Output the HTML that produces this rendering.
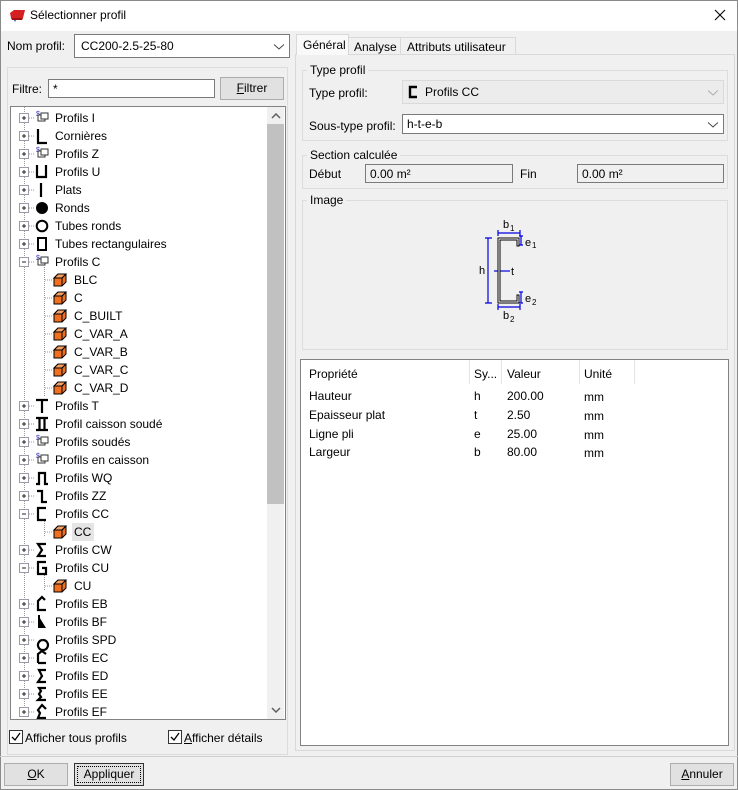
<!DOCTYPE html>
<html><head><meta charset="utf-8"><style>
*{box-sizing:border-box;margin:0;padding:0}
body{width:738px;height:790px;background:#f0f0f0;font-family:"Liberation Sans",sans-serif;font-size:12px;color:#000;position:relative;overflow:hidden}
.a{position:absolute}
.win{left:0;top:0;width:738px;height:790px;border:1px solid #8a8a8a}
.title{left:1px;top:1px;width:736px;height:30px;background:#fff}
.inp{background:#fff;border:1px solid #7a7a7a}
.btn{background:#e1e1e1;border:1px solid #adadad;text-align:center;line-height:21px}
.grp{border:1px solid #dcdcdc}
.gl{background:#f0f0f0;padding:0 3px}
.row{position:absolute;left:0;height:18px;width:256px}
.row span{position:absolute;top:2px;white-space:nowrap}
.dis{background:#f0f0f0;border:1px solid #7a7a7a}
u{text-decoration:underline}
</style></head><body>
<div class="a win"></div>
<div class="a title"></div>
<svg class="a" style="left:8px;top:9px" width="18" height="14"><path d="M2 4 L6 1 L17 1 L15 9 L3 9 Z" fill="#d42020"/><path d="M3 9 L15 9 L14 11 L4 11Z" fill="#a01010"/><path d="M6 11 L8 11 L7 13Z" fill="#2050c0"/></svg>
<div class="a" style="left:30px;top:8px;font-size:12px">Sélectionner profil</div>
<svg class="a" style="left:714px;top:9px" width="12" height="12"><path d="M1 1L11 11M11 1L1 11" stroke="#000" stroke-width="1.1"/></svg>

<div class="a" style="left:7px;top:39px">Nom profil:</div>
<div class="a inp" style="left:74px;top:34px;width:216px;height:24px"><span class="a" style="left:6px;top:4px">CC200-2.5-25-80</span>
<svg class="a" style="right:5px;top:9px" width="10" height="6"><path d="M0 0.5L5 5L10 0.5" stroke="#444" fill="none"/></svg></div>

<div class="a grp" style="left:7px;top:67px;width:281px;height:688px"></div>
<div class="a" style="left:12px;top:82px">Filtre:</div>
<div class="a inp" style="left:48px;top:79px;width:167px;height:19px"><span class="a" style="left:4px;top:2px">*</span></div>
<div class="a btn" style="left:220px;top:77px;width:64px;height:23px"><u>F</u>iltrer</div>

<div class="a" style="left:10px;top:106px;width:276px;height:614px;background:#fff;border:1px solid #828282;overflow:hidden">
<div class="a" style="left:256px;top:0;width:17px;height:612px;background:#f0f0f0"></div>
<div class="a" style="left:256px;top:17px;width:17px;height:380px;background:#c1c1c1"></div>
<svg class="a" style="left:260px;top:6px" width="10" height="6"><path d="M1 5L5 1L9 5" stroke="#606060" stroke-width="1.5" fill="none"/></svg>
<svg class="a" style="left:260px;top:600px" width="10" height="6"><path d="M1 1L5 5L9 1" stroke="#606060" stroke-width="1.5" fill="none"/></svg>
<svg class="a" style="left:0;top:0" width="256" height="612">
<defs>
<g id="p"><rect x="-4.5" y="-4.5" width="9" height="9" fill="#fff" stroke="#9a9aa8"/><path d="M-2 0H2M0 -2V2" stroke="#222"/></g>
<g id="m"><rect x="-4.5" y="-4.5" width="9" height="9" fill="#fff" stroke="#9a9aa8"/><path d="M-2 0H2" stroke="#222"/></g>
<g id="cube"><path d="M-6 -2L-2 -6H6V2L2 6H-6Z" fill="#f07020" stroke="#000"/><path d="M-6 -2H2L6-6H-2Z" fill="#f8a060"/><path d="M-6 -2H2V6M2 -2L6 -6" fill="none" stroke="#000"/><path d="M-6 -2L-2 -6H6L2 -2Z" fill="none" stroke="#000"/></g>
<g id="s"><text x="-6" y="-2" font-size="7" fill="#3030c0" font-family="Liberation Sans">$</text><rect x="-4" y="-3" width="7" height="6" fill="#fff" stroke="#333"/><rect x="-1" y="-5" width="7" height="6" fill="#fff" stroke="#333"/></g>
</defs>
<g stroke="#999" stroke-dasharray="1 1" fill="none">
<path d="M13.5 0V600"/>
<path d="M33.5 160V290M33.5 412V430M33.5 466V484"/>
</g>
<g stroke="#999" stroke-dasharray="1 1">
<path d="M18 11H24M18 29H24M18 47H24M18 65H24M18 83H24M18 101H24M18 119H24M18 137H24M18 155H24M18 299H24M18 317H24M18 335H24M18 353H24M18 371H24M18 389H24M18 407H24M18 443H24M18 461H24M18 497H24M18 515H24M18 533H24M18 551H24M18 569H24M18 587H24M18 605H24"/>
<path d="M34 173H42M34 191H42M34 209H42M34 227H42M34 245H42M34 263H42M34 281H42M34 425H42M34 479H42"/>
</g>
<use href="#p" x="13" y="11"/><use href="#p" x="13" y="29"/><use href="#p" x="13" y="47"/><use href="#p" x="13" y="65"/><use href="#p" x="13" y="83"/><use href="#p" x="13" y="101"/><use href="#p" x="13" y="119"/><use href="#p" x="13" y="137"/><use href="#m" x="13" y="155"/>
<use href="#p" x="13" y="299"/><use href="#p" x="13" y="317"/><use href="#p" x="13" y="335"/><use href="#p" x="13" y="353"/><use href="#p" x="13" y="371"/><use href="#p" x="13" y="389"/><use href="#m" x="13" y="407"/><use href="#p" x="13" y="443"/><use href="#m" x="13" y="461"/>
<use href="#p" x="13" y="497"/><use href="#p" x="13" y="515"/><use href="#p" x="13" y="533"/><use href="#p" x="13" y="551"/><use href="#p" x="13" y="569"/><use href="#p" x="13" y="587"/><use href="#p" x="13" y="605"/>
<use href="#s" x="31" y="11"/><use href="#s" x="31" y="47"/><use href="#s" x="31" y="155"/><use href="#s" x="31" y="335"/><use href="#s" x="31" y="353"/>
<use href="#cube" x="49" y="173"/><use href="#cube" x="49" y="191"/><use href="#cube" x="49" y="209"/><use href="#cube" x="49" y="227"/><use href="#cube" x="49" y="245"/><use href="#cube" x="49" y="263"/><use href="#cube" x="49" y="281"/><use href="#cube" x="49" y="425"/><use href="#cube" x="49" y="479"/>
<g fill="none" stroke="#000" stroke-width="2.2">
<path d="M27 22V36H36"/>
<path d="M26 58V70H35V58"/>
<path d="M30 76V90"/>
<path d="M25 293H37M31 293V306"/>
<path d="M25 311H37M25 323H37M28.5 311V323M33.5 311V323"/>
<path d="M25 377H28V366H34V377H37"/>
<path d="M26 384H31V395H36"/>
<path d="M35 401H27V413H35"/>
<path d="M35 437H27L31 443L27 449H35"/>
<path d="M35 455H27V467H35V461H31"/>
<path d="M34 493L31 490L27 494V503H35"/>
<path d="M32 533A5 5 0 1 1 31.9 533" />
<path d="M27 556V547L31 544L35 547M27 556H35"/>
<path d="M35 563H28L31 569L27 575H35"/>
<path d="M35 581H28L30 584L28 587L30 590L27 593H35"/>
<path d="M35 602L31 598L27 603L29 606L27 611H35"/>
</g>
<path d="M27 508V521H35Z" fill="#000"/>
<rect x="27" y="508" width="2" height="13" fill="#000"/>
<circle cx="31" cy="101" r="6" fill="#000"/>
<circle cx="31" cy="119" r="5.3" fill="none" stroke="#000" stroke-width="2"/>
<rect x="27" y="131" width="8" height="12" fill="none" stroke="#000" stroke-width="2"/>
</svg>
<div class="row" style="top:2px"><span style="left:44px">Profils I</span></div>
<div class="row" style="top:20px"><span style="left:44px">Cornières</span></div>
<div class="row" style="top:38px"><span style="left:44px">Profils Z</span></div>
<div class="row" style="top:56px"><span style="left:44px">Profils U</span></div>
<div class="row" style="top:74px"><span style="left:44px">Plats</span></div>
<div class="row" style="top:92px"><span style="left:44px">Ronds</span></div>
<div class="row" style="top:110px"><span style="left:44px">Tubes ronds</span></div>
<div class="row" style="top:128px"><span style="left:44px">Tubes rectangulaires</span></div>
<div class="row" style="top:146px"><span style="left:44px">Profils C</span></div>
<div class="row" style="top:164px"><span style="left:63px">BLC</span></div>
<div class="row" style="top:182px"><span style="left:63px">C</span></div>
<div class="row" style="top:200px"><span style="left:63px">C_BUILT</span></div>
<div class="row" style="top:218px"><span style="left:63px">C_VAR_A</span></div>
<div class="row" style="top:236px"><span style="left:63px">C_VAR_B</span></div>
<div class="row" style="top:254px"><span style="left:63px">C_VAR_C</span></div>
<div class="row" style="top:272px"><span style="left:63px">C_VAR_D</span></div>
<div class="row" style="top:290px"><span style="left:44px">Profils T</span></div>
<div class="row" style="top:308px"><span style="left:44px">Profil caisson soudé</span></div>
<div class="row" style="top:326px"><span style="left:44px">Profils soudés</span></div>
<div class="row" style="top:344px"><span style="left:44px">Profils en caisson</span></div>
<div class="row" style="top:362px"><span style="left:44px">Profils WQ</span></div>
<div class="row" style="top:380px"><span style="left:44px">Profils ZZ</span></div>
<div class="row" style="top:398px"><span style="left:44px">Profils CC</span></div>
<div class="a" style="left:61px;top:416px;width:22px;height:18px;background:#e5e5e5"></div>
<div class="row" style="top:416px"><span style="left:63px">CC</span></div>
<div class="row" style="top:434px"><span style="left:44px">Profils CW</span></div>
<div class="row" style="top:452px"><span style="left:44px">Profils CU</span></div>
<div class="row" style="top:470px"><span style="left:63px">CU</span></div>
<div class="row" style="top:488px"><span style="left:44px">Profils EB</span></div>
<div class="row" style="top:506px"><span style="left:44px">Profils BF</span></div>
<div class="row" style="top:524px"><span style="left:44px">Profils SPD</span></div>
<div class="row" style="top:542px"><span style="left:44px">Profils EC</span></div>
<div class="row" style="top:560px"><span style="left:44px">Profils ED</span></div>
<div class="row" style="top:578px"><span style="left:44px">Profils EE</span></div>
<div class="row" style="top:596px"><span style="left:44px">Profils EF</span></div>
</div>

<svg class="a" style="left:9px;top:730px" width="14" height="14"><rect x=".5" y=".5" width="13" height="13" fill="#fff" stroke="#333"/><path d="M3 7L6 10L11 3" stroke="#000" stroke-width="1.3" fill="none"/></svg>
<div class="a" style="left:25px;top:731px">Afficher tous profils</div>
<svg class="a" style="left:168px;top:730px" width="14" height="14"><rect x=".5" y=".5" width="13" height="13" fill="#fff" stroke="#333"/><path d="M3 7L6 10L11 3" stroke="#000" stroke-width="1.3" fill="none"/></svg>
<div class="a" style="left:184px;top:731px"><u>A</u>fficher détails</div>

<div class="a" style="left:0;top:756px;width:738px;height:1px;background:#d0d0d0"></div>
<div class="a btn" style="left:4px;top:763px;width:64px;height:23px"><u>O</u>K</div>
<div class="a btn" style="left:74px;top:763px;width:70px;height:23px;outline:1px dotted #000;outline-offset:-4px;border-color:#333">Appliquer</div>
<div class="a btn" style="left:670px;top:763px;width:64px;height:23px"><u>A</u>nnuler</div>

<div class="a" style="left:295px;top:54px;width:440px;height:697px;border:1px solid #d9d9d9;background:#f0f0f0"></div>
<div class="a" style="left:296px;top:34px;width:53px;height:21px;background:#f9f9f9;border:1px solid #d9d9d9;border-bottom:none;padding:3px 0 0 6px">Général</div>
<div class="a" style="left:349px;top:37px;width:52px;height:18px;background:#f0f0f0;border:1px solid #d9d9d9;border-left:none;padding:2px 0 0 5px">Analyse</div>
<div class="a" style="left:401px;top:37px;width:115px;height:18px;background:#f0f0f0;border:1px solid #d9d9d9;border-left:none;padding:2px 0 0 6px">Attributs utilisateur</div>

<div class="a grp" style="left:302px;top:70px;width:426px;height:71px"></div>
<div class="a gl" style="left:307px;top:63px">Type profil</div>
<div class="a" style="left:309px;top:86px">Type profil:</div>
<div class="a" style="left:402px;top:80px;width:322px;height:24px;background:#ececec;border:1px solid #dadada">
<svg class="a" style="left:5px;top:4px" width="10" height="14"><path d="M9 2H2V12H9" stroke="#000" stroke-width="2.4" fill="none"/></svg>
<span class="a" style="left:22px;top:4px">Profils CC</span>
<svg class="a" style="right:5px;top:9px" width="10" height="6"><path d="M0 0.5L5 5L10 0.5" stroke="#aaa" fill="none"/></svg></div>
<div class="a" style="left:309px;top:119px">Sous-type profil:</div>
<div class="a inp" style="left:402px;top:114px;width:322px;height:20px"><span class="a" style="left:4px;top:2px">h-t-e-b</span>
<svg class="a" style="right:5px;top:7px" width="10" height="6"><path d="M0 0.5L5 5L10 0.5" stroke="#444" fill="none"/></svg></div>

<div class="a grp" style="left:302px;top:155px;width:426px;height:34px"></div>
<div class="a gl" style="left:307px;top:148px">Section calculée</div>
<div class="a" style="left:309px;top:167px">Début</div>
<div class="a dis" style="left:365px;top:164px;width:148px;height:19px"><span class="a" style="left:4px;top:2px">0.00 m²</span></div>
<div class="a" style="left:520px;top:167px">Fin</div>
<div class="a dis" style="left:577px;top:164px;width:147px;height:19px"><span class="a" style="left:4px;top:2px">0.00 m²</span></div>

<div class="a grp" style="left:302px;top:200px;width:426px;height:150px"></div>
<div class="a gl" style="left:307px;top:193px">Image</div>
<svg class="a" style="left:470px;top:215px" width="80" height="110">
<g stroke="#0000e0" stroke-width="1.2" fill="none">
<path d="M18 23V88M15 23H22M15 88H22"/>
<path d="M28 18H50M28 15V21M50 15V21"/>
<path d="M28 92H50M28 89V95M50 89V95"/>
<path d="M51 21V30M49 21H53M49 30H53"/>
<path d="M51 77V88M49 77H53M49 88H53"/>
<path d="M24 56H40"/>
</g>
<path d="M28 23H49V31H47V25H30V86H47V80H49V88H28Z" fill="#fff" stroke="#000" stroke-width="1"/>
<g font-family="Liberation Sans" font-size="11" fill="#000">
<text x="33" y="13">b</text><text x="40" y="16" font-size="8">1</text>
<text x="33" y="104">b</text><text x="40" y="107" font-size="8">2</text>
<text x="55" y="31">e</text><text x="62" y="33" font-size="8">1</text>
<text x="55" y="87">e</text><text x="62" y="90" font-size="8">2</text>
<text x="9" y="59">h</text>
<text x="41" y="60">t</text>
</g>
</svg>

<div class="a" style="left:300px;top:359px;width:429px;height:387px;background:#fff;border:1px solid #828282">
<div class="a" style="left:168px;top:0;width:1px;height:24px;background:#e5e5e5"></div>
<div class="a" style="left:200px;top:0;width:1px;height:24px;background:#e5e5e5"></div>
<div class="a" style="left:278px;top:0;width:1px;height:24px;background:#e5e5e5"></div>
<div class="a" style="left:333px;top:0;width:1px;height:24px;background:#e5e5e5"></div>
<span class="a" style="left:8px;top:7px">Propriété</span><span class="a" style="left:173px;top:7px">Sy...</span><span class="a" style="left:206px;top:7px">Valeur</span><span class="a" style="left:283px;top:7px">Unité</span>
<span class="a" style="left:8px;top:29px">Hauteur</span><span class="a" style="left:173px;top:29px">h</span><span class="a" style="left:206px;top:29px">200.00</span><span class="a" style="left:283px;top:30px">mm</span>
<span class="a" style="left:8px;top:48px">Epaisseur plat</span><span class="a" style="left:173px;top:48px">t</span><span class="a" style="left:206px;top:48px">2.50</span><span class="a" style="left:283px;top:49px">mm</span>
<span class="a" style="left:8px;top:67px">Ligne pli</span><span class="a" style="left:173px;top:67px">e</span><span class="a" style="left:206px;top:67px">25.00</span><span class="a" style="left:283px;top:68px">mm</span>
<span class="a" style="left:8px;top:85px">Largeur</span><span class="a" style="left:173px;top:85px">b</span><span class="a" style="left:206px;top:85px">80.00</span><span class="a" style="left:283px;top:86px">mm</span>
</div>
</body></html>
